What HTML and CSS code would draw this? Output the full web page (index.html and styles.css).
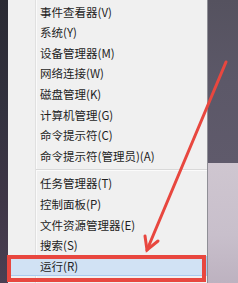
FILE: index.html
```html
<!DOCTYPE html>
<html lang="zh-CN">
<head>
    <meta charset="UTF-8">
    <title>运行</title>
    <link rel="stylesheet" href="styles.css">
</head>
<body>
    <div class="screen">
        <div class="desk-left"></div>
        <ul class="menu">
            <li class="item">事件查看器(V)</li>
            <li class="item">系统(Y)</li>
            <li class="item">设备管理器(M)</li>
            <li class="item">网络连接(W)</li>
            <li class="item">磁盘管理(K)</li>
            <li class="item">计算机管理(G)</li>
            <li class="item">命令提示符(C)</li>
            <li class="item">命令提示符(管理员)(A)</li>
            <li class="sep"></li>
            <li class="item">任务管理器(T)</li>
            <li class="item">控制面板(P)</li>
            <li class="item">文件资源管理器(E)</li>
            <li class="item">搜索(S)</li>
            <li class="item active">运行(R)</li>
        </ul>
        <div class="desk-right">
            <div class="sky"></div>
            <div class="ground"></div>
        </div>

        <!-- annotation drawn over the screenshot -->
        <div class="mark"></div>
        <svg class="arrow" width="238" height="283" viewBox="0 0 238 283">
            <g stroke="#e8473f" stroke-width="3" stroke-linecap="round" fill="none">
                <line x1="226" y1="62" x2="147" y2="250"/>
                <polyline points="158,241 147,250 145,236"/>
            </g>
        </svg>
    </div>
</body>
</html>
```

FILE: styles.css
```css
body {
    margin: 0;
    font-family: "Noto Sans CJK SC", "Noto Sans", sans-serif;
}

.screen {
    position: relative;
    display: flex;
    width: 238px;
    height: 283px;
    overflow: hidden;
}

.desk-left {
    width: 8px;
    background: linear-gradient(180deg, #2a2a33 0%, #33323f 40%, #3e3646 70%, #4a3f52 100%);
}

.menu {
    list-style: none;
    margin: 0;
    padding: 1.7px 0 0 0;
    width: 199px;
    border-right: 1px solid #8f8f96;
    background-color: #f0f0f0;
    background-image: linear-gradient(90deg, transparent 27px, #e0e0e0 27px, #e0e0e0 28px, #fafafa 28px, #fafafa 29px, transparent 29px);
}

.item {
    height: 20.6px;
    line-height: 20.6px;
    padding-left: 32px;
    font-size: 11.5px;
    color: #1e1e1e;
    white-space: nowrap;
}

.item.active {
    background-color: #d1e2f4;
    box-shadow: inset 0 0 0 1px #aacbee;
}

.sep {
    height: 7px;
    margin-left: 28px;
    background: linear-gradient(180deg, transparent 3px, #d9d9d9 3px, #d9d9d9 4px, #fbfbfb 4px, #fbfbfb 5px, transparent 5px);
}

.desk-right {
    flex: 1;
    display: flex;
    flex-direction: column;
}

.sky {
    height: 163px;
    background: linear-gradient(180deg, #55525f 0%, #5c5868 50%, #5f5a6b 100%);
}

.ground {
    flex: 1;
    background: linear-gradient(180deg, #cfc6d0 0%, #c8bfcb 60%, #bdb2c0 100%);
}

.mark {
    position: absolute;
    left: 7px;
    top: 255px;
    width: 199px;
    height: 27px;
    box-sizing: border-box;
    border: 4px solid #e8473f;
}

.arrow {
    position: absolute;
    left: 0;
    top: 0;
    pointer-events: none;
}
```
